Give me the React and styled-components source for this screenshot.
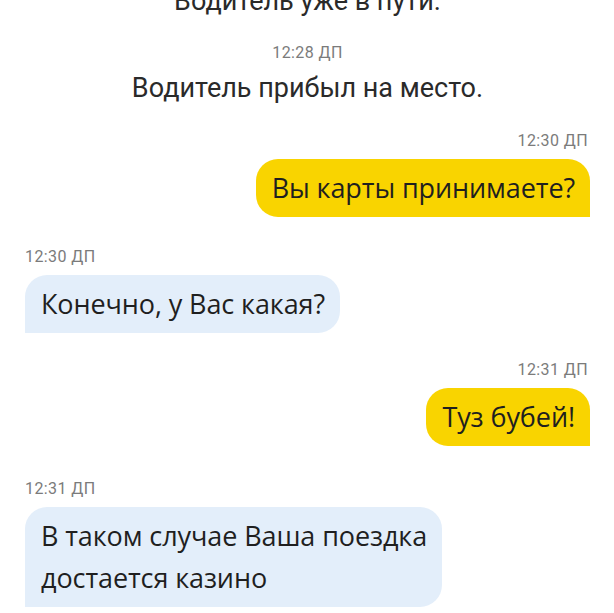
import React from 'react';
import styled, { createGlobalStyle } from 'styled-components';

const GlobalStyle = createGlobalStyle`
  html, body {
    margin: 0;
    padding: 0;
    background: #fff;
  }
  body {
    font-family: 'Roboto', 'Liberation Sans', sans-serif;
    overflow: hidden;
  }
`;

const Chat = styled.div`
  width: 614px;
  height: 613px;
  box-sizing: border-box;
  padding: 0 24px 0 25px;
  display: flex;
  flex-direction: column;
  overflow: hidden;
`;

const SystemText = styled.div`
  font-family: 'Roboto', 'Liberation Sans', sans-serif;
  font-size: 27px;
  line-height: 32px;
  color: #2a2a2a;
  text-align: center;
  margin-top: ${p => p.$cut ? '-15px' : '9px'};
`;

const Stamp = styled.div`
  font-family: 'Roboto', 'Liberation Sans', sans-serif;
  font-size: 16px;
  line-height: 20px;
  letter-spacing: 0.4px;
  color: #7b7b7b;
  text-align: ${p => p.$align || 'left'};
  padding-right: ${p => p.$align === 'right' ? '2px' : '0'};
  margin-top: ${p => p.$gap || 0}px;
  margin-bottom: ${p => p.$align === 'center' ? 0 : 8}px;
`;

const Row = styled.div`
  display: flex;
  justify-content: ${p => p.$out ? 'flex-end' : 'flex-start'};
`;

const Bubble = styled.div`
  font-family: 'Open Sans', 'Noto Sans', sans-serif;
  font-size: 27px;
  line-height: 42px;
  letter-spacing: -0.1px;
  white-space: nowrap;
  color: #1f1f1f;
  padding: 8px 15px 8px 16px;
  background: ${p => p.$out ? '#f9d400' : '#e3eefa'};
  border-radius: ${p => p.$out ? '22px 22px 0 22px' : '22px 22px 22px 0'};
`;

const Message = ({ out, time, gap, children }) => (
  <>
    <Stamp $align={out ? 'right' : 'left'} $gap={gap}>{time}</Stamp>
    <Row $out={out}>
      <Bubble $out={out}>{children}</Bubble>
    </Row>
  </>
);

const App = () => (
  <>
    <GlobalStyle />
    <Chat>
      <SystemText $cut>Водитель уже в пути.</SystemText>
      <Stamp $align="center" $gap={26}>12:28 ДП</Stamp>
      <SystemText>Водитель прибыл на место.</SystemText>
      <Message out time="12:30 ДП" gap={27}>Вы карты принимаете?</Message>
      <Message time="12:30 ДП" gap={30}>Конечно, у Вас какая?</Message>
      <Message out time="12:31 ДП" gap={27}>Туз бубей!</Message>
      <Message time="12:31 ДП" gap={33}>
        В таком случае Ваша поездка<br />достается казино
      </Message>
    </Chat>
  </>
);

export default App;
